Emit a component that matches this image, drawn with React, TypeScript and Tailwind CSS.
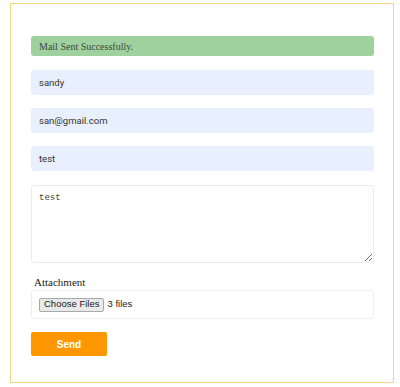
import { useState } from 'react';

export default function App() {
  const [name, setName] = useState('sandy');
  const [email, setEmail] = useState('san@gmail.com');
  const [subject, setSubject] = useState('test');
  const [message, setMessage] = useState('test');

  return (
    <div className="w-[400px] h-[387px] bg-white pt-[3px] pl-[10px]">
      <div className="w-[384px] h-[380px] border border-[#f3d67e] pt-[32px] pl-[20px] pr-[19px]">
        {/* Status */}
        <div className="h-[20px] rounded-[3px] bg-[#9fd19f] pl-[8px] flex items-center text-[10px] text-[#3d4a3d] font-['Liberation_Serif',serif]">
          Mail Sent Successfully.
        </div>

        {/* Fields */}
        <div className="mt-[14px] flex flex-col gap-[13px]">
          <input
            value={name}
            onChange={(e) => setName(e.target.value)}
            className="h-[25px] rounded-[3px] bg-[#e8f0fe] px-[8px] text-[9.5px] text-[#333] font-['Roboto',Arial,sans-serif] outline-none"
          />
          <input
            value={email}
            onChange={(e) => setEmail(e.target.value)}
            className="h-[25px] rounded-[3px] bg-[#e8f0fe] px-[8px] text-[9.5px] text-[#333] font-['Roboto',Arial,sans-serif] outline-none"
          />
          <input
            value={subject}
            onChange={(e) => setSubject(e.target.value)}
            className="h-[25px] rounded-[3px] bg-[#e8f0fe] px-[8px] text-[9.5px] text-[#333] font-['Roboto',Arial,sans-serif] outline-none"
          />
          <textarea
            value={message}
            onChange={(e) => setMessage(e.target.value)}
            className="mt-[1px] h-[78px] rounded-[3px] border border-[#ececec] bg-white px-[7px] py-[6px] text-[9px] text-[#444] font-['Liberation_Mono',monospace] outline-none"
          />
        </div>

        {/* Attachment */}
        <div className="mt-[12px] pl-[3px] text-[11px] leading-[14px] text-[#222] font-['Liberation_Serif',serif]">
          Attachment
        </div>
        <div className="mt-[1px] h-[29px] rounded-[3px] border border-[#efefef] flex items-center pl-[7px] gap-[3px]">
          <span className="h-[14px] px-[4px] border border-[#a9a9a9] bg-[#e9e9e9] rounded-[2px] flex items-center text-[9.5px] text-[#222] font-['Liberation_Sans',Arial,sans-serif]">
            Choose Files
          </span>
          <span className="text-[9.5px] text-[#222] font-['Liberation_Sans',Arial,sans-serif]">3 files</span>
        </div>

        <button
          type="button"
          className="mt-[13px] w-[76px] h-[24px] rounded-[2px] bg-[#ff9700] text-white text-[10px] font-bold font-['Liberation_Sans',Arial,sans-serif]"
        >
          Send
        </button>
      </div>
    </div>
  );
}
